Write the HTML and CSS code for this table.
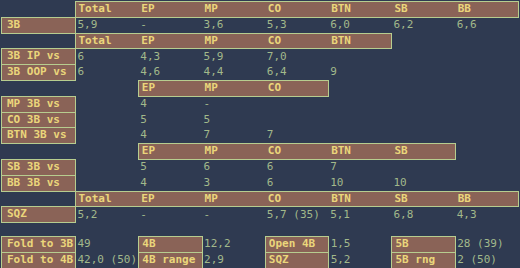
FILE: index.html
```html
<!DOCTYPE html>
<html>
<head>
<meta charset="utf-8">
<link rel="stylesheet" href="styles.css">
</head>
<body>
<table class="grid">
  <colgroup><col class="c0"><col><col><col><col><col><col><col></colgroup>
  <tr><td></td><td class="h hl">Total</td><td class="h">EP</td><td class="h">MP</td><td class="h">CO</td><td class="h">BTN</td><td class="h">SB</td><td class="h hr">BB</td></tr>
  <tr><td class="lab">3B</td><td>5,9</td><td>-</td><td>3,6</td><td>5,3</td><td>6,0</td><td>6,2</td><td>6,6</td></tr>
  <tr><td></td><td class="h hl">Total</td><td class="h">EP</td><td class="h">MP</td><td class="h">CO</td><td class="h hr">BTN</td><td></td><td></td></tr>
  <tr><td class="lab">3B IP vs</td><td>6</td><td>4,3</td><td>5,9</td><td>7,0</td><td></td><td></td><td></td></tr>
  <tr><td class="lab">3B OOP vs</td><td>6</td><td>4,6</td><td>4,4</td><td>6,4</td><td>9</td><td></td><td></td></tr>
  <tr><td></td><td></td><td class="h hl">EP</td><td class="h">MP</td><td class="h hr">CO</td><td></td><td></td><td></td></tr>
  <tr><td class="lab">MP 3B vs</td><td></td><td>4</td><td>-</td><td></td><td></td><td></td><td></td></tr>
  <tr><td class="lab">CO 3B vs</td><td></td><td>5</td><td>5</td><td></td><td></td><td></td><td></td></tr>
  <tr><td class="lab">BTN 3B vs</td><td></td><td>4</td><td>7</td><td>7</td><td></td><td></td><td></td></tr>
  <tr><td></td><td></td><td class="h hl">EP</td><td class="h">MP</td><td class="h">CO</td><td class="h">BTN</td><td class="h hr">SB</td><td></td></tr>
  <tr><td class="lab">SB 3B vs</td><td></td><td>5</td><td>6</td><td>6</td><td>7</td><td></td><td></td></tr>
  <tr><td class="lab">BB 3B vs</td><td></td><td>4</td><td>3</td><td>6</td><td>10</td><td>10</td><td></td></tr>
  <tr><td></td><td class="h hl">Total</td><td class="h">EP</td><td class="h">MP</td><td class="h">CO</td><td class="h">BTN</td><td class="h">SB</td><td class="h hr">BB</td></tr>
  <tr><td class="lab">SQZ</td><td>5,2</td><td>-</td><td>-</td><td>5,7 (35)</td><td>5,1</td><td>6,8</td><td>4,3</td></tr>
  <tr class="blank"><td></td><td></td><td></td><td></td><td></td><td></td><td></td><td></td></tr>
  <tr><td class="lab">Fold to 3B</td><td>49</td><td class="lab2">4B</td><td>12,2</td><td class="lab2">Open 4B</td><td>1,5</td><td class="lab2">5B</td><td>28 (39)</td></tr>
  <tr><td class="lab">Fold to 4B</td><td>42,0 (50)</td><td class="lab2">4B range</td><td>2,9</td><td class="lab2">SQZ</td><td>5,2</td><td class="lab2">5B rng</td><td>2 (50)</td></tr>
</table>
</body>
</html>
```
FILE: styles.css
```css
html, body {
  margin: 0;
  padding: 0;
  background: #2f3a51;
}
body {
  padding: 1px 0 0 1px;
  font-family: "DejaVu Sans Mono", monospace;
  font-size: 11px;
  color: #a2b98b;
}
.grid {
  border-collapse: collapse;
  table-layout: fixed;
  width: 518px;
}
.grid .c0 {
  width: 74px;
}
.grid td {
  padding: 1px 1px 1px 1.5px;
  line-height: 12.8px;
  white-space: nowrap;
  overflow: visible;
  vertical-align: middle;
}
.grid td.h {
  background: #8a6357;
  color: #ead67b;
  font-weight: bold;
  border-top: 1px solid #b7cd8f;
  border-bottom: 1px solid #b7cd8f;
  padding-left: 2.5px;
}
.grid td.hl {
  border-left: 1px solid #b7cd8f;
}
.grid td.hr {
  border-right: 1px solid #b7cd8f;
}
.grid td.lab,
.grid td.lab2 {
  background: #8a6357;
  color: #ead67b;
  font-weight: bold;
  border: 1px solid #b7cd8f;
}
.grid td.lab {
  padding-left: 5px;
}
.grid td.lab2 {
  padding-left: 3px;
}
.grid tr.blank td {
  padding: 0;
  height: 13px;
}
```
